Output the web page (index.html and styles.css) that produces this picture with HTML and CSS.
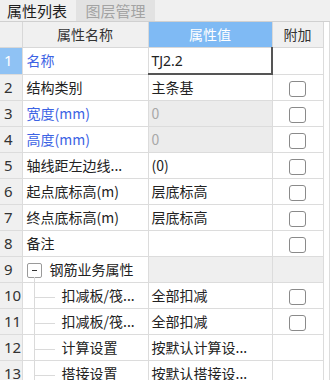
FILE: index.html
```html
<!DOCTYPE html>
<html lang="zh">
<head>
<meta charset="utf-8">
<link rel="stylesheet" href="styles.css">
</head>
<body>
<div class="panel">
  <div class="tabs">
    <div class="tab active">属性列表</div>
    <div class="tab">图层管理</div>
  </div>
  <div class="gridwrap">
    <table class="grid">
      <colgroup><col class="c-num"><col class="c-name"><col class="c-val"><col class="c-add"></colgroup>
      <thead>
        <tr><th class="num"></th><th>属性名称</th><th class="hl">属性值</th><th>附加</th></tr>
      </thead>
      <tbody>
        <tr><td class="num sel">1</td><td class="name blue">名称</td><td class="val edit">TJ2.2</td><td class="add"></td></tr>
        <tr><td class="num">2</td><td class="name">结构类别</td><td class="val">主条基</td><td class="add"><span class="cb"></span></td></tr>
        <tr><td class="num">3</td><td class="name blue">宽度(mm)</td><td class="val dis">0</td><td class="add"><span class="cb"></span></td></tr>
        <tr><td class="num">4</td><td class="name blue">高度(mm)</td><td class="val dis">0</td><td class="add"><span class="cb"></span></td></tr>
        <tr><td class="num">5</td><td class="name">轴线距左边线...</td><td class="val">(0)</td><td class="add"><span class="cb"></span></td></tr>
        <tr><td class="num">6</td><td class="name">起点底标高(m)</td><td class="val">层底标高</td><td class="add"><span class="cb"></span></td></tr>
        <tr><td class="num">7</td><td class="name">终点底标高(m)</td><td class="val">层底标高</td><td class="add"><span class="cb"></span></td></tr>
        <tr><td class="num">8</td><td class="name">备注</td><td class="val"></td><td class="add"><span class="cb"></span></td></tr>
        <tr><td class="num">9</td><td class="name group"><span class="tog"></span>钢筋业务属性</td><td class="val gbg"></td><td class="add gbg"></td></tr>
        <tr><td class="num">10</td><td class="name child"><span class="branch"></span>扣减板/筏...</td><td class="val">全部扣减</td><td class="add"><span class="cb"></span></td></tr>
        <tr><td class="num">11</td><td class="name child"><span class="branch"></span>扣减板/筏...</td><td class="val">全部扣减</td><td class="add"><span class="cb"></span></td></tr>
        <tr><td class="num">12</td><td class="name child"><span class="branch"></span>计算设置</td><td class="val">按默认计算设...</td><td class="add"></td></tr>
        <tr><td class="num">13</td><td class="name child"><span class="branch"></span>搭接设置</td><td class="val">按默认搭接设...</td><td class="add"></td></tr>
      </tbody>
    </table>
    <div class="gutter"></div>
  </div>
</div>
</body>
</html>
```
FILE: styles.css
```css
html, body {
  margin: 0;
  padding: 0;
  background: #ffffff;
}
body {
  font-family: "Noto Sans CJK SC", "Noto Sans", sans-serif;
  color: #222;
  width: 330px;
  height: 380px;
  overflow: hidden;
}
.panel {
  display: flex;
  flex-direction: column;
}
.tabs {
  display: flex;
  gap: 2px;
  height: 21px;
  background: #f0f0f0;
  border-bottom: 1px solid #d0d0d0;
}
.tab {
  height: 21px;
  width: 79px;
  display: flex;
  align-items: center;
  justify-content: center;
  font-size: 15px;
  font-weight: 400;
  line-height: 21px;
  color: #a3a3a3;
  background: #e2e2e2;
}
.tab.active {
  width: 74px;
  color: #1e1e1e;
  background: #f0f0f0;
}
.gridwrap {
  display: flex;
}
.grid {
  border-collapse: collapse;
  table-layout: fixed;
  width: 323px;
  font-size: 14px;
}
.c-num { width: 22px; }
.c-name { width: 126px; }
.c-val { width: 124px; }
.c-add { width: 51px; }
.grid th, .grid td {
  height: 25px;
  padding: 0;
  border: 1px solid #dcdcdc;
  white-space: nowrap;
  overflow: hidden;
  line-height: 25px;
}
.grid tr > :first-child { border-left: none; }
.grid thead tr > * { border-top: none; }
.grid th {
  background: #f0f0f0;
  font-weight: 400;
  text-align: center;
  color: #333;
  border-color: #d8d8d8;
}
.grid th.hl {
  background: #7fbaf4;
  color: #fff;
}
.num {
  background: #f0f0f0;
  text-align: left;
  padding-left: 4px !important;
  color: #333;
  font-family: "Noto Sans", sans-serif;
  font-size: 15px;
}
.grid td.num { border-color: #dcdcdc; }
.num.sel {
  background: #8fc2f4;
  color: #fff;
}
.name {
  padding-left: 4px !important;
}
.blue { color: #3c63e4; }
.val {
  padding-left: 3px !important;
}
.val.edit {
  border: 1px solid #666;
  border-right: 2px solid #555;
  border-bottom: 2px solid #555;
  font-family: "Noto Sans", sans-serif;
}
.val.dis {
  background: #ececec;
  color: #a8a8a8;
}
.gbg { background: #efefef; }
.add {
  text-align: center;
}
.cb {
  display: inline-block;
  width: 15px;
  height: 14px;
  border: 1px solid #8a8a8a;
  border-radius: 3px;
  vertical-align: middle;
  background: #fff;
}
.group { position: relative; }
.tog {
  display: inline-block;
  width: 13px;
  height: 13px;
  border: 1px solid #9a9a9a;
  border-radius: 2px;
  margin-right: 8px;
  vertical-align: middle;
  position: relative;
  top: -1px;
  background: #fff;
}
.tog::after {
  content: "";
  position: absolute;
  left: 4px;
  top: 6px;
  width: 5px;
  height: 1px;
  background: #333;
}
.group::after {
  content: "";
  position: absolute;
  left: 11px;
  top: 20px;
  bottom: -1px;
  width: 1px;
  background: #dadada;
}
.child { position: relative; }
.child::before {
  content: "";
  position: absolute;
  left: 11px;
  top: 0;
  bottom: 0;
  width: 1px;
  background: #dadada;
}
.branch {
  display: inline-block;
  width: 20px;
  height: 1px;
  background: #dadada;
  margin-left: 8px;
  margin-right: 7px;
  vertical-align: middle;
}
.gutter {
  width: 5px;
  border-right: 1px solid #dcdcdc;
  background: #fff;
}
```
